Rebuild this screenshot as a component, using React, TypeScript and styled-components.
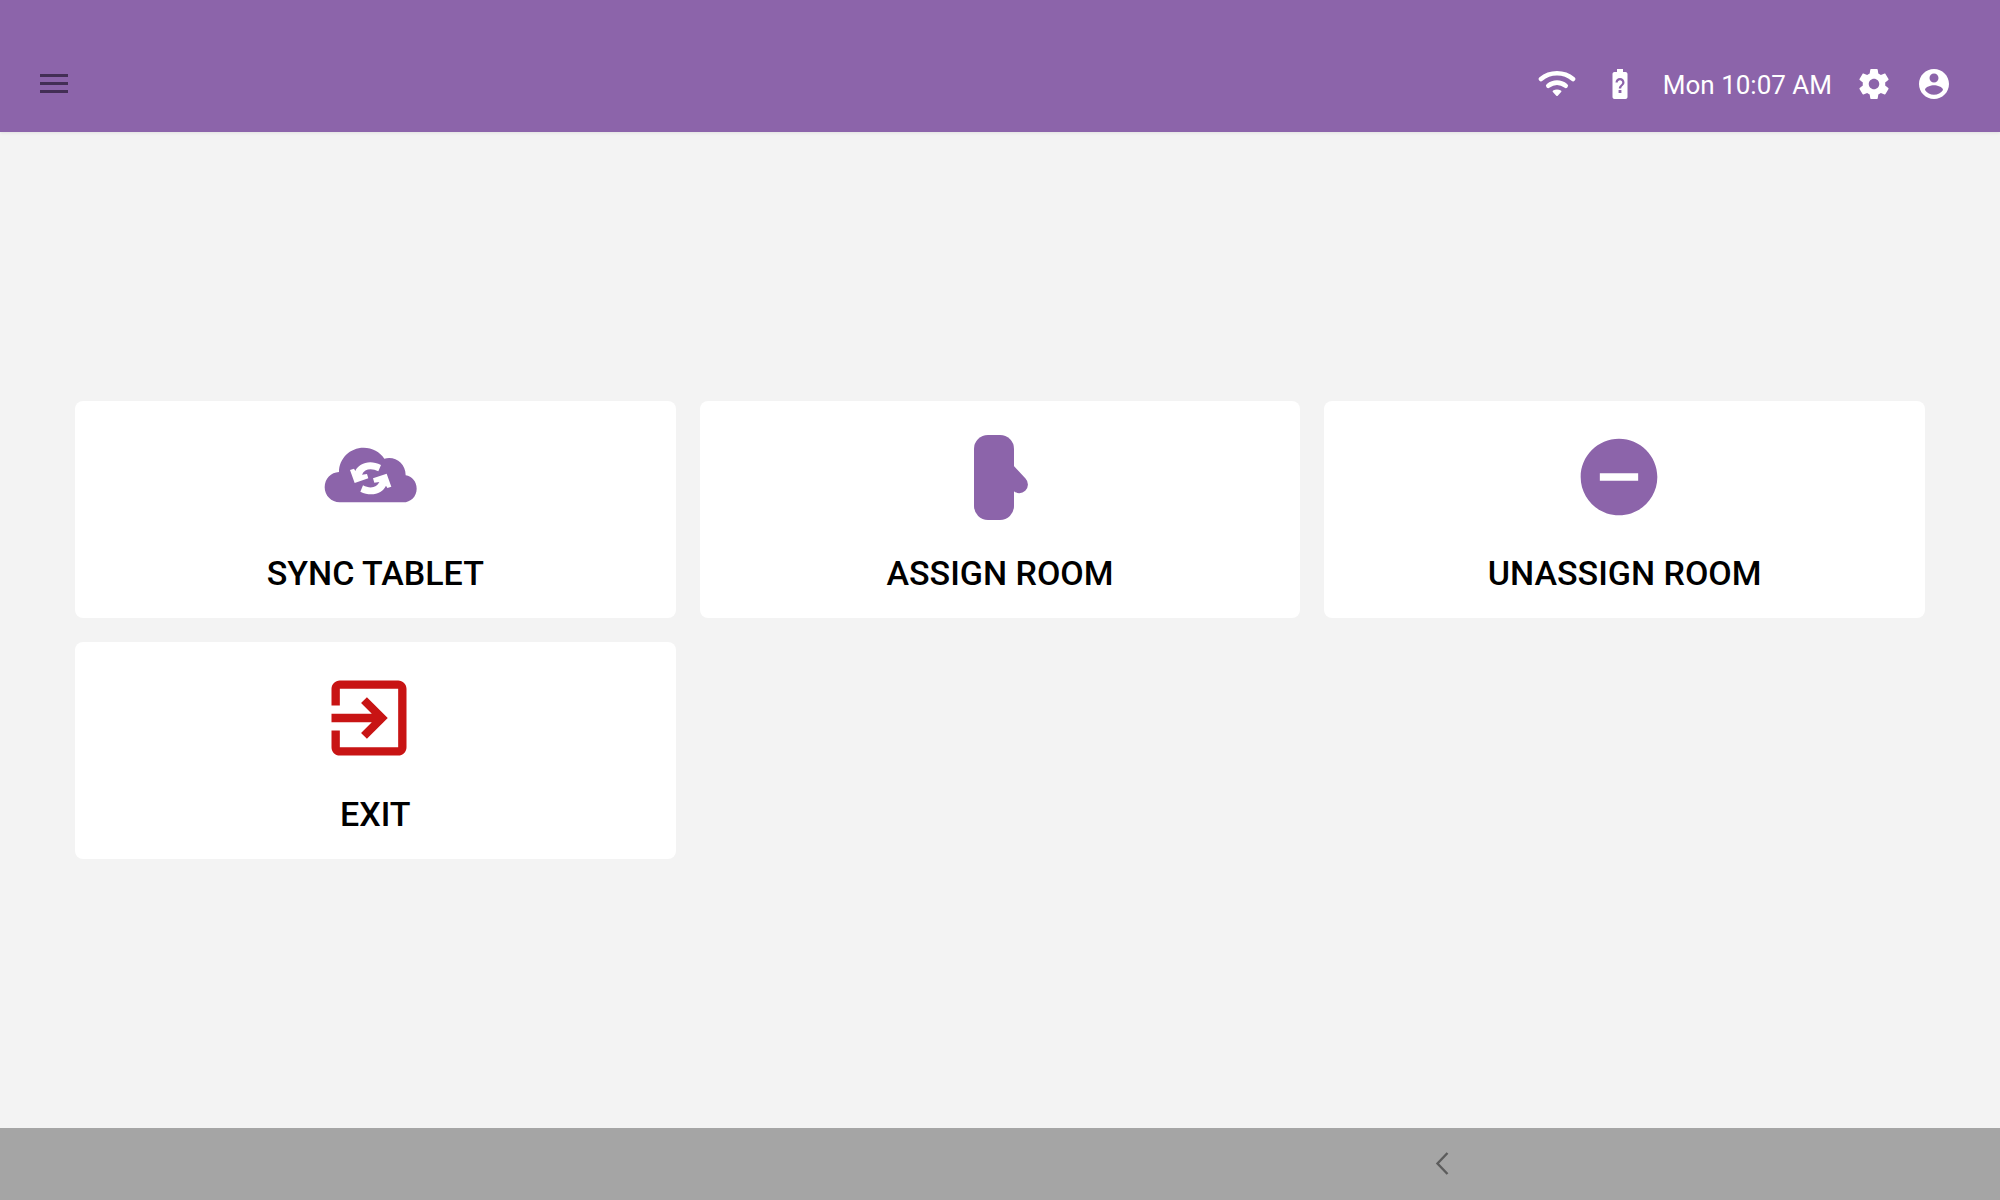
import React from "react";
import styled, { createGlobalStyle } from "styled-components";

const purple = "#8c64aa";
const red = "#c81414";

const GlobalStyle = createGlobalStyle`
  * { box-sizing: border-box; }
  body { margin: 0; background: #f3f3f3; font-family: Roboto, "Noto Sans", sans-serif; }
`;

const Page = styled.div`
  display: flex;
  flex-direction: column;
  min-height: 100vh;
`;

const Header = styled.header`
  display: flex;
  align-items: center;
  justify-content: space-between;
  height: 132px;
  padding: 36px 48px 0 36px;
  background: ${purple};
  color: #fff;
  box-shadow: 0 1px 3px rgba(0, 0, 0, 0.08);
`;

const Status = styled.div`
  display: flex;
  align-items: center;
  gap: 24px;
`;

const Clock = styled.time`
  font-size: 26px;
  line-height: 32px;
  padding: 2px 0 0 1px;
`;

const IconButton = styled.button`
  display: flex;
  padding: 0;
  border: 0;
  background: none;
  color: inherit;
  cursor: pointer;
`;

const Main = styled.main`
  display: flex;
  flex: 1;
  flex-direction: column;
  justify-content: center;
  padding: 24px 75px;
`;

const Cards = styled.div`
  display: grid;
  grid-template-columns: repeat(3, 1fr);
  gap: 24px;
`;

const Card = styled.button`
  display: flex;
  flex-direction: column;
  align-items: center;
  gap: 26px;
  padding: 26px 24px 25px;
  border: 0;
  border-radius: 8px;
  background: #fff;
  color: #000;
  font-family: inherit;
  font-size: 34px;
  font-weight: 500;
  line-height: 40px;
  cursor: pointer;
`;

const IconSlot = styled.span<{ $color: string }>`
  display: flex;
  align-items: center;
  justify-content: center;
  width: 100px;
  height: 100px;
  margin-right: 12px;
  color: ${(p) => p.$color};
`;

const NavBar = styled.footer`
  display: flex;
  align-items: center;
  justify-content: flex-end;
  height: 72px;
  padding-right: 26.4%;
  background: #a5a5a5;
  color: #5c5c5c;
`;

const BackButton = styled(IconButton)`
  justify-content: center;
  width: 60px;
`;

function Glyph({ d, size }: { d: string; size: number }) {
  return (
    <svg width={size} height={size} viewBox="0 0 24 24" fill="currentColor" aria-hidden="true">
      <path d={d} />
    </svg>
  );
}

const batteryPath =
  "M15.67 4H14V2h-4v2H8.33C7.6 4 7 4.6 7 5.33v15.33C7 21.4 7.6 22 8.33 22h7.33c.74 0 1.34-.6 1.34-1.33V5.33C17 4.6 16.4 4 15.67 4zm-2.72 13.95h-1.9v-1.9h1.9v1.9zm1.35-5.26s-.38.42-.67.71c-.48.48-.83 1.15-.83 1.6h-1.6c0-.83.46-1.52.93-2l.93-.94c.27-.27.44-.65.44-1.06 0-.83-.67-1.5-1.5-1.5s-1.5.67-1.5 1.5H9c0-1.66 1.34-3 3-3s3 1.34 3 3c0 .66-.27 1.26-.7 1.69z";
const settingsPath =
  "M19.43 12.98c.04-.32.07-.64.07-.98s-.03-.66-.07-.98l2.11-1.65c.19-.15.24-.42.12-.64l-2-3.46c-.12-.22-.39-.3-.61-.22l-2.49 1c-.52-.4-1.08-.73-1.69-.98l-.38-2.65C14.46 2.18 14.25 2 14 2h-4c-.25 0-.46.18-.49.42l-.38 2.65c-.61.25-1.17.59-1.69.98l-2.49-1c-.23-.09-.49 0-.61.22l-2 3.46c-.13.22-.07.49.12.64l2.11 1.65c-.04.32-.07.65-.07.98s.03.66.07.98l-2.11 1.65c-.19.15-.24.42-.12.64l2 3.46c.12.22.39.3.61.22l2.49-1c.52.4 1.08.73 1.69.98l.38 2.65c.03.24.24.42.49.42h4c.25 0 .46-.18.49-.42l.38-2.65c.61-.25 1.17-.59 1.69-.98l2.49 1c.23.09.49 0 .61-.22l2-3.46c.12-.22.07-.49-.12-.64l-2.11-1.65zM12 15.5c-1.93 0-3.5-1.57-3.5-3.5s1.57-3.5 3.5-3.5 3.5 1.57 3.5 3.5-1.57 3.5-3.5 3.5z";
const accountPath =
  "M12 2C6.48 2 2 6.48 2 12s4.48 10 10 10 10-4.48 10-10S17.52 2 12 2zm0 3c1.66 0 3 1.34 3 3s-1.34 3-3 3-3-1.34-3-3 1.34-3 3-3zm0 14.2c-2.5 0-4.71-1.28-6-3.22.03-1.99 4-3.08 6-3.08 1.99 0 5.97 1.09 6 3.08-1.29 1.94-3.5 3.22-6 3.22z";
const minusPath =
  "M12 2C6.48 2 2 6.48 2 12s4.48 10 10 10 10-4.48 10-10S17.52 2 12 2zm5 11H7v-2h10v2z";
const exitPath =
  "M10.09 15.59L11.5 17l5-5-5-5-1.41 1.41L12.67 11H3v2h9.67l-2.58 2.59zM19 3H5c-1.11 0-2 .9-2 2v4h2V5h14v14H5v-4H3v4c0 1.1.89 2 2 2h14c1.1 0 2-.9 2-2V5c0-1.1-.9-2-2-2z";

function MenuIcon() {
  return (
    <svg width="36" height="36" viewBox="0 0 36 36" fill="#432e55" aria-hidden="true">
      <path d="M4 8h28v3H4zM4 16h28v3H4zM4 24h28v3H4z" />
    </svg>
  );
}

function WifiIcon() {
  return (
    <svg width="40" height="36" viewBox="0 0 40 36" fill="none" stroke="currentColor" strokeLinecap="round" aria-hidden="true">
      <path d="M3 13C12 5.300 26 5.300 35 13" strokeWidth="4.600" />
      <path d="M10.300 19.800C15.500 15.600 22.500 15.600 27.700 19.800" strokeWidth="4.600" />
      <path d="M15.600 25.400Q19 23.400 22.400 25.400L19 29Z" fill="currentColor" strokeWidth="2" strokeLinejoin="round" />
    </svg>
  );
}

function CloudSyncIcon() {
  return (
    <svg width="100" height="100" viewBox="58 -8 300 300" aria-hidden="true">
      <path
        fill="currentColor"
        d="M118 127C118 86 151 54 192 54C218 54 241 67 254 87C286 78 318 100 318 137C337 139 351 157 351 177C351 200 334 218 310 218H120C95 218 75 198 75 173C75 147 94 128 118 127Z"
      />
      <path
        fill="#fff"
        d="M151 121L163 117L167 124C177 101 210 89 244 106L236 125C215 114 194 118 187 135L202 133L206 146L165 160Z"
      />
      <path
        fill="#fff"
        d="M275 171L263 175L259 168C249 191 216 203 182 186L190 167C211 178 232 174 239 157L224 159L220 146L261 132Z"
      />
    </svg>
  );
}

function DoorIcon() {
  return (
    <svg width="100" height="100" viewBox="0 0 100 100" fill="currentColor" aria-hidden="true">
      <rect x="30" y="8" width="40" height="85" rx="14" />
      <path d="M69 38L81.500 51.500A8.200 8.200 0 0 1 69 63.500Z" />
    </svg>
  );
}

function BackIcon() {
  return (
    <svg width="24" height="24" viewBox="0 0 24 24" fill="none" stroke="currentColor" strokeWidth="2.400" aria-hidden="true">
      <path d="M17.500 1L7.500 11.500L17.500 22" />
    </svg>
  );
}

const actions = [
  { label: "SYNC TABLET", color: purple, icon: <CloudSyncIcon /> },
  { label: "ASSIGN ROOM", color: purple, icon: <DoorIcon /> },
  { label: "UNASSIGN ROOM", color: purple, icon: <Glyph d={minusPath} size={92} /> },
  { label: "EXIT", color: red, icon: <Glyph d={exitPath} size={100} /> },
];

export default function App() {
  return (
    <Page>
      <GlobalStyle />
      <Header>
        <IconButton type="button" aria-label="Menu">
          <MenuIcon />
        </IconButton>
        <Status>
          <WifiIcon />
          <Glyph d={batteryPath} size={36} />
          <Clock>Mon 10:07 AM</Clock>
          <IconButton type="button" aria-label="Settings">
            <Glyph d={settingsPath} size={36} />
          </IconButton>
          <IconButton type="button" aria-label="Account">
            <Glyph d={accountPath} size={36} />
          </IconButton>
        </Status>
      </Header>
      <Main>
        <Cards>
          {actions.map((a) => (
            <Card key={a.label} type="button">
              <IconSlot $color={a.color}>{a.icon}</IconSlot>
              {a.label}
            </Card>
          ))}
        </Cards>
      </Main>
      <NavBar>
        <BackButton type="button" aria-label="Back">
          <BackIcon />
        </BackButton>
      </NavBar>
    </Page>
  );
}
